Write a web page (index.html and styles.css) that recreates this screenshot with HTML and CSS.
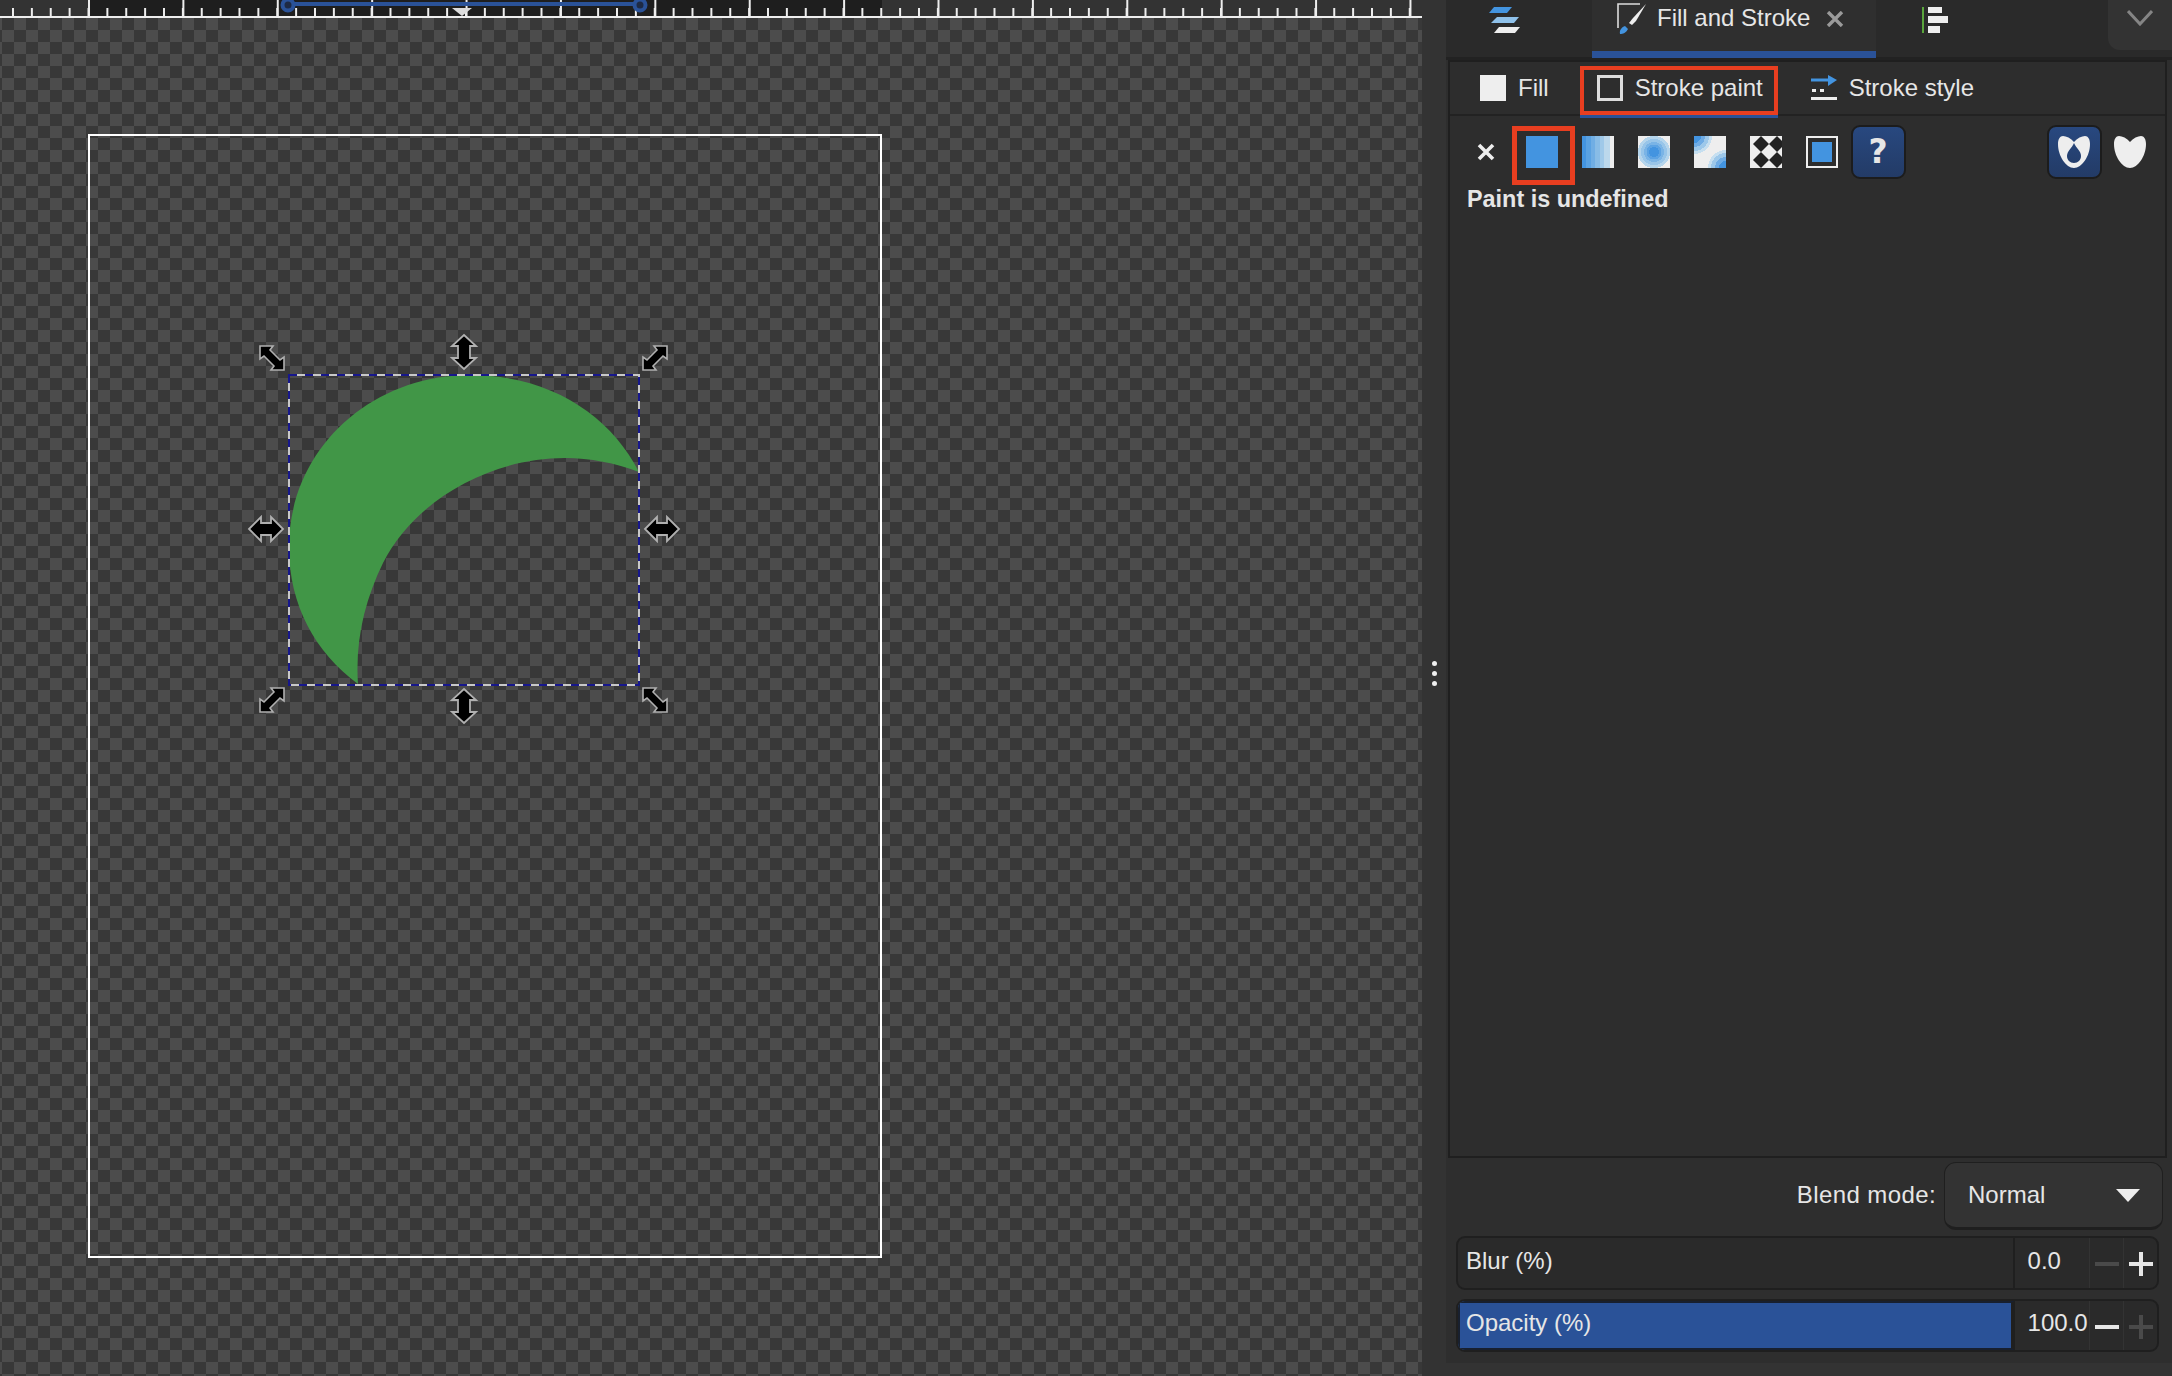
FILE: index.html
```html
<!DOCTYPE html>
<html lang="en">
<head>
  <meta charset="UTF-8" />
  <title>Fill and Stroke</title>
  <link rel="stylesheet" href="styles.css">
</head>
<body>
  <div class="workspace">
    <div class="ruler">
      <svg class="ruler-marks" width="1422" height="16" viewBox="0 0 1422 16">
        <line x1="288" y1="4" x2="640" y2="4" stroke="#2a5298" stroke-width="4" />
        <circle cx="288" cy="5" r="5.5" fill="#1e2a44" stroke="#2a5298" stroke-width="4" />
        <circle cx="640" cy="5" r="5.5" fill="#1e2a44" stroke="#2a5298" stroke-width="4" />
        <polygon points="452,8 472,8 462,16" fill="#dcdcdc" />
      </svg>
    </div>
    <div class="canvas">
      <svg class="drawing" width="1422" height="1358" viewBox="0 18 1422 1358">
        <defs>
          <polygon id="arrow-h" points="1,13 13,1 13,7 23,7 23,1 35,13 23,25 23,19 13,19 13,25" fill="#000" stroke="#b0b0b0" stroke-width="1.8" />
          <polygon id="arrow-v" points="13,1 25,12 19,12 19,24 25,24 13,35 1,24 7,24 7,12 1,12" fill="#000" stroke="#b0b0b0" stroke-width="1.8" />
          <polygon id="arrow-d" points="1,1 14,1 11,5 21,15 25,12 25,25 12,25 15,21 5,11 1,14" fill="#000" stroke="#b0b0b0" stroke-width="1.6" />
        </defs>
        <rect x="89" y="135" width="792" height="1122" fill="none" stroke="#fff" stroke-width="2" />
        <path d="M639 472 C610 415 550 375 470 375 C370 375 289 450 289 547 C289 605 315 652 358 684 C355 640 365 600 383 563 C415 500 490 458 565 458 C590 458 615 463 639 472 Z" fill="#419647" />
        <rect x="289" y="375" width="350" height="310" fill="none" stroke="#c8c8c8" stroke-width="2" />
        <rect x="289" y="375" width="350" height="310" fill="none" stroke="#17178c" stroke-width="2" stroke-dasharray="8 8" />
        <use href="#arrow-d" x="259" y="345" />
        <use href="#arrow-d" x="642" y="687" />
        <use href="#arrow-d" transform="translate(668 345) scale(-1 1)" />
        <use href="#arrow-d" transform="translate(285 687) scale(-1 1)" />
        <use href="#arrow-v" x="451" y="334" />
        <use href="#arrow-v" x="451" y="688" />
        <use href="#arrow-h" x="248" y="516" />
        <use href="#arrow-h" x="644" y="516" />
      </svg>
    </div>
  </div>

  <div class="gutter">
    <span class="dot"></span>
    <span class="dot"></span>
    <span class="dot"></span>
  </div>

  <div class="dock">
    <div class="tabbar">
      <div class="tab tab-first">
        <svg width="32" height="28" viewBox="0 0 32 28">
          <polygon points="6,0 24,0 19,6 1,6" fill="#4394e0" />
          <polygon points="9,10 31,10 26,16 3,16" fill="#8fc1ea" />
          <polygon points="11,20 32,20 27,26 6,26" fill="#eee" />
        </svg>
      </div>
      <div class="tab tab-active">
        <svg width="32" height="32" viewBox="0 0 32 32">
          <path d="M24 2 H2 V26" fill="none" stroke="#ddd" stroke-width="1.6" />
          <path d="M30 2 L17 16 L13 21 L16 23 L20 19 Z" fill="#eee" />
          <path d="M4 32 C3 28 6 25 9 24 L12 27 C10 31 7 32 4 32 Z" fill="#4394e0" />
        </svg>
        <span class="tab-title">Fill and Stroke</span>
        <span class="tab-close">
          <svg width="18" height="16" viewBox="0 0 18 16">
            <path d="M2 1 L16 15 M16 1 L2 15" stroke="#9a9a9a" stroke-width="3.4" />
          </svg>
        </span>
      </div>
      <div class="tab tab-third">
        <svg width="26" height="26" viewBox="0 0 26 26">
          <rect x="0" y="0" width="2" height="26" fill="#5aa63c" />
          <rect x="6" y="0" width="14" height="6" fill="#eee" />
          <rect x="6" y="9" width="20" height="7" fill="#eee" />
          <rect x="6" y="19" width="12" height="7" fill="#eee" />
        </svg>
      </div>
      <div class="tab-menu">
        <svg width="26" height="16" viewBox="0 0 26 16">
          <path d="M1 1 L13 14 L25 1" fill="none" stroke="#858585" stroke-width="3" />
        </svg>
      </div>
    </div>

    <div class="panel">
      <div class="subtabs">
        <div class="subtab">
          <span class="swatch-fill"></span>
          <span>Fill</span>
        </div>
        <div class="subtab subtab-active">
          <span class="swatch-stroke"></span>
          <span>Stroke paint</span>
        </div>
        <div class="subtab">
          <svg width="26" height="26" viewBox="0 0 26 26">
            <path d="M0 5 H20" stroke="#4394e0" stroke-width="3" />
            <polygon points="17,0 26,5 17,11" fill="#4394e0" />
            <rect x="1" y="14" width="4" height="3" fill="#eee" />
            <rect x="9" y="14" width="4" height="3" fill="#eee" />
            <rect x="0" y="22" width="26" height="3" fill="#eee" />
          </svg>
          <span>Stroke style</span>
        </div>
      </div>

      <div class="paint-row">
        <div class="paint-cell">
          <svg width="18" height="18" viewBox="0 0 18 18">
            <path d="M2 2 L16 16 M16 2 L2 16" stroke="#eee" stroke-width="3.6" />
          </svg>
        </div>
        <div class="paint-cell paint-marked"><span class="paint paint-flat"></span></div>
        <div class="paint-cell"><span class="paint paint-linear"></span></div>
        <div class="paint-cell"><span class="paint paint-radial"></span></div>
        <div class="paint-cell"><span class="paint paint-mesh"></span></div>
        <div class="paint-cell">
          <svg class="paint" width="32" height="32" viewBox="0 0 32 32">
            <rect width="32" height="32" fill="#eee" />
            <path d="M11 0 L19 8 L11 16 L3 8 Z M27 0 L35 8 L27 16 L19 8 Z M11 16 L19 24 L11 32 L3 24 Z M27 16 L35 24 L27 32 L19 24 Z" fill="#222" />
          </svg>
        </div>
        <div class="paint-cell"><span class="paint paint-swatch"><span class="paint-swatch-inner"></span></span></div>
        <div class="paint-cell"><span class="tool-btn tool-question">?</span></div>
        <div class="paint-spacer"></div>
        <div class="paint-cell">
          <span class="tool-btn">
            <svg width="32" height="32" viewBox="0 0 32 32">
              <path fill-rule="evenodd" d="M16 6 C19 2 24 0 27 0 C30 0 32 3 32 8 C32 20 24 32 16 32 C8 32 0 20 0 8 C0 3 2 0 5 0 C8 0 13 2 16 6 Z M16 7 C18 12 23 15 23 20 C23 24 20 27 16 27 C12 27 9 24 9 20 C9 15 14 12 16 7 Z" fill="#eee" />
            </svg>
          </span>
        </div>
        <div class="paint-cell">
          <svg width="32" height="32" viewBox="0 0 32 32">
            <path d="M16 6 C19 2 24 0 27 0 C30 0 32 3 32 8 C32 20 24 32 16 32 C8 32 0 20 0 8 C0 3 2 0 5 0 C8 0 13 2 16 6 Z" fill="#eee" />
          </svg>
        </div>
      </div>
      <div class="paint-status">Paint is undefined</div>
    </div>

    <div class="blend-row">
      <span class="blend-label">Blend mode:</span>
      <div class="select">
        <span>Normal</span>
        <span class="select-arrow"></span>
      </div>
    </div>

    <div class="spin">
      <div class="spin-track"><span class="spin-label">Blur (%)</span></div>
      <div class="spin-value">0.0</div>
      <div class="spin-btn"><span class="minus dim"></span></div>
      <div class="spin-btn"><span class="plus"></span></div>
    </div>
    <div class="spin spin-opacity">
      <div class="spin-track spin-track-full"><span class="spin-label">Opacity (%)</span></div>
      <div class="spin-value">100.0</div>
      <div class="spin-btn"><span class="minus"></span></div>
      <div class="spin-btn"><span class="plus dim"></span></div>
    </div>
  </div>
</body>
</html>
```

FILE: styles.css
```css
* {
  box-sizing: border-box;
}
html, body {
  margin: 0;
  height: 100%;
}
body {
  display: flex;
  width: 2172px;
  height: 1376px;
  overflow: hidden;
  font-family: "Liberation Sans", Arial, sans-serif;
  font-size: 24px;
  color: #e6e6e6;
  background-color: #333;
}

/* Canvas side */
.workspace {
  width: 1422px;
  display: flex;
  flex-direction: column;
}
.ruler {
  position: relative;
  height: 18px;
  border-bottom: 2px solid #eee;
  background-color: #333;
  background-image: linear-gradient(#1e1e1e, #1e1e1e);
  background-size: 794px 16px;
  background-repeat: no-repeat;
  background-position: 88px 0;
}
.ruler::before, .ruler::after {
  content: "";
  position: absolute;
  top: 0;
  left: 0;
  right: 0;
  height: 16px;
  background-repeat: repeat-x;
}
.ruler::before {
  background-image: linear-gradient(90deg, #eee 2px, transparent 2px);
  background-size: 18.88px 8px;
  background-position: 12px 8px;
}
.ruler::after {
  background-image: linear-gradient(90deg, #eee 2px, transparent 2px);
  background-size: 94.4px 16px;
  background-position: 88px 0;
}
.ruler-marks {
  position: absolute;
  top: 0;
  left: 0;
  z-index: 1;
}
.canvas {
  position: relative;
  flex: 1;
  background-image: conic-gradient(#4c4c4c 25%, #383838 0 50%, #4c4c4c 0 75%, #383838 0);
  background-size: 24px 24px;
  background-position: 14px -12px;
}
.drawing {
  position: absolute;
  top: 0;
  left: 0;
}

.gutter {
  width: 24px;
  display: flex;
  flex-direction: column;
  align-items: center;
  justify-content: center;
  gap: 5px;
  padding-bottom: 30px;
}
.dot {
  width: 5px;
  height: 5px;
  border-radius: 50%;
  background-color: #eee;
}

/* Dock */
.dock {
  width: 726px;
  height: 1363px;
  display: flex;
  flex-direction: column;
  background-color: #2e2e2e;
}
.tabbar {
  display: flex;
  height: 60px;
  border-bottom: 3px solid #222;
  background-color: #2a2a2a;
}
.tab {
  display: flex;
  align-items: center;
}
.tab-first {
  width: 146px;
  padding: 0 0 16px 42px;
}
.tab-active {
  width: 284px;
  padding: 0 0 16px 24px;
  background-color: #2f2f2f;
  border-bottom: 7px solid #2a5298;
  margin-bottom: -1px;
}
.tab-title {
  margin-left: 9px;
}
.tab-close {
  display: flex;
  margin-left: 16px;
  margin-top: 2px;
}
.tab-third {
  padding: 0 0 18px 46px;
}
.tab-menu {
  width: 64px;
  height: 50px;
  margin-left: auto;
  display: flex;
  align-items: center;
  justify-content: center;
  padding-bottom: 14px;
  background-color: #333;
  border-bottom-left-radius: 12px;
}
.panel {
  height: 1098px;
  margin: 0 5px 0 2px;
  border: 2px solid #1f1f1f;
  background-color: #2d2d2d;
}
.subtabs {
  display: flex;
  height: 54px;
  padding-left: 1px;
  border-bottom: 2px solid #222;
}
.subtab {
  position: relative;
  display: flex;
  align-items: center;
  gap: 12px;
  padding: 0 13px 1px 16px;
  margin-left: 13px;
}
.subtab:nth-child(2) {
  margin-left: 18px;
  height: 56px;
  padding: 0 13px 4px 17px;
  width: 198px;
}
.subtab:nth-child(3) {
  margin-left: 17px;
}
.subtab-active::after {
  content: "";
  position: absolute;
  inset: 4px 0 3px 0;
  border: 4px solid #e83e20;
}
.subtab-active::before {
  content: "";
  position: absolute;
  left: 0;
  right: 0;
  bottom: 0;
  height: 3px;
  background-color: #2a5298;
}
.swatch-fill {
  width: 26px;
  height: 26px;
  background-color: #eee;
}
.swatch-stroke {
  width: 26px;
  height: 26px;
  border: 3px solid #ddd;
}
.paint-row {
  display: flex;
  height: 53px;
  margin-top: 9px;
  padding-left: 8px;
  padding-right: 7px;
}
.paint-cell {
  position: relative;
  width: 56px;
  display: flex;
  align-items: center;
  justify-content: center;
}
.paint-spacer {
  flex: 1;
}
.paint-marked::after {
  content: "";
  position: absolute;
  top: 1px;
  bottom: -7px;
  left: -2px;
  right: -5px;
  border: 5px solid #e83e20;
}
.paint {
  display: block;
  width: 32px;
  height: 32px;
}
.paint-flat {
  background-color: #4394e0;
}
.paint-linear {
  background: linear-gradient(90deg, #4394e0 0 14%, #5aa2e2 14% 28%, #70aee4 28% 42%, #88bce6 42% 56%, #a0c9e9 56% 70%, #bcd8ec 70% 88%, #eee 88%);
}
.paint-radial {
  background-color: #eee;
  background-image: radial-gradient(circle closest-side, #4394e0 0 5px, #5da3e3 5px 7.5px, #7ab4e6 7.5px 10px, #98c5e9 10px 13px, #b5d5ec 13px 16px, transparent 16px);
}
.paint-mesh {
  background-color: #eee;
  background-image:
    radial-gradient(circle at 0 0, #4394e0 0 7px, #6face5 7px 11px, #9dc8ea 11px 15px, #c6dff0 15px 18px, transparent 18px),
    radial-gradient(circle at 100% 100%, #4394e0 0 7px, #6face5 7px 11px, #9dc8ea 11px 15px, #c6dff0 15px 18px, transparent 18px);
}
.paint-swatch {
  display: flex;
  align-items: center;
  justify-content: center;
  border: 2px solid #eee;
}
.paint-swatch-inner {
  width: 20px;
  height: 20px;
  background-color: #4394e0;
}
.tool-btn {
  display: flex;
  flex-shrink: 0;
  align-items: center;
  justify-content: center;
  width: 55px;
  height: 54px;
  border: 2px solid #1c1c1c;
  border-radius: 9px;
  background: linear-gradient(#28487f, #233b66);
}
.tool-question {
  font-family: "DejaVu Sans", sans-serif;
  font-weight: bold;
  font-size: 33px;
}
.paint-status {
  padding-left: 17px;
  margin-top: 7px;
  font-weight: bold;
  font-size: 23.4px;
  line-height: 28px;
}

/* Bottom controls */
.blend-row {
  display: flex;
  justify-content: flex-end;
  align-items: center;
  gap: 8px;
  height: 68px;
  margin-top: 4px;
  padding-right: 9px;
}
.blend-label {
  letter-spacing: .4px;
  padding-bottom: 2px;
}
.select {
  width: 219px;
  height: 68px;
  display: flex;
  align-items: center;
  justify-content: space-between;
  padding: 0 22px 0 23px;
  border: 1px solid #1f1f1f;
  border-bottom-width: 3px;
  border-radius: 12px;
  background-color: #333;
}
.select-arrow {
  width: 0;
  height: 0;
  border-left: 12px solid transparent;
  border-right: 12px solid transparent;
  border-top: 13px solid #eee;
}
.spin {
  display: flex;
  align-items: stretch;
  width: 703px;
  height: 54px;
  margin: 6px 0 0 10px;
  border: 2px solid #1f1f1f;
  border-radius: 9px;
  background-color: #2a2a2a;
  overflow: hidden;
}
.spin-opacity {
  height: 53px;
  margin-top: 9px;
}
.spin-track {
  width: 559px;
  display: flex;
  align-items: center;
  padding: 0 0 4px 8px;
  border-right: 2px solid #1f1f1f;
}
.spin-track-full {
  padding: 0 0 5px 6px;
  border-left: 2px solid #18202f;
  border-top: 2px solid #18202f;
  border-bottom: 2px solid #18202f;
  border-right: 4px solid #1f1f1f;
  background-color: #2a5298;
}
.spin-value {
  width: 75px;
  padding: 0 0 5px 13px;
  display: flex;
  align-items: center;
  white-space: nowrap;
}
.spin-btn {
  width: 34px;
  position: relative;
  border-left: 1px solid #333;
}
.minus, .plus {
  position: absolute;
  top: 50%;
  left: 50%;
  width: 24px;
  height: 4px;
  margin: -1px 0 0 -12px;
  background-color: #e6e6e6;
}
.plus::after {
  content: "";
  position: absolute;
  top: -10px;
  left: 10px;
  width: 4px;
  height: 24px;
  background-color: #e6e6e6;
}
.dim, .dim::after {
  background-color: #4a4a4a;
}
```
